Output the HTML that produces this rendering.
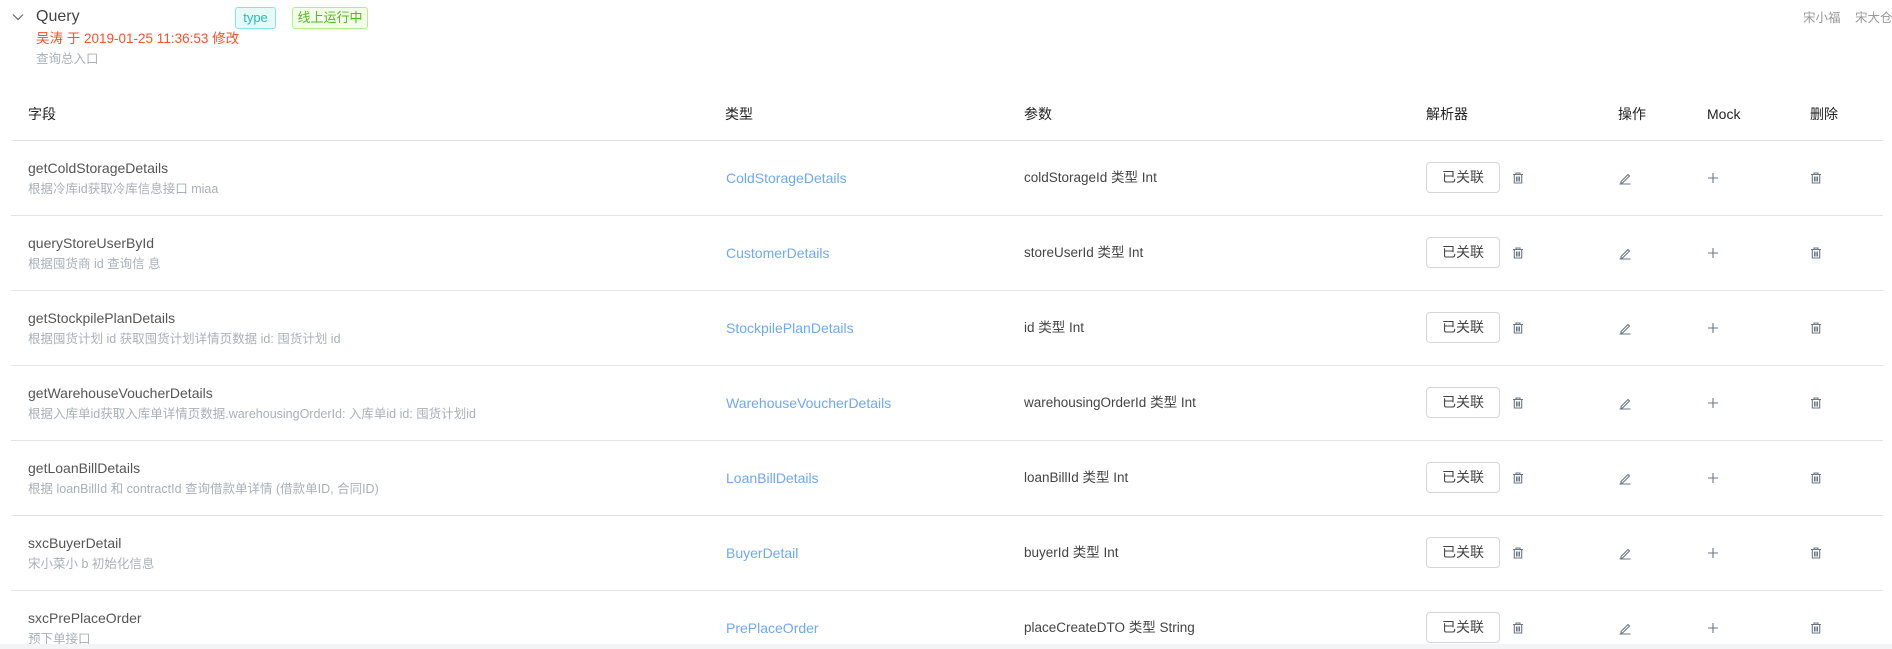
<!DOCTYPE html>
<html><head><meta charset="utf-8"><style>
*{margin:0;padding:0;box-sizing:border-box}
body{width:1892px;height:649px;background:#fff;font-family:"Liberation Sans","Noto Sans CJK SC",sans-serif;position:relative;overflow:hidden;color:#333}
.a{position:absolute;white-space:nowrap;line-height:1}
.tag{position:absolute;border:1px solid;border-radius:3px;font-size:13px;line-height:20px;text-align:center}
.line{position:absolute;left:11px;width:1872px;height:1px;background:#e4e4e4}
.h{font-size:14px;color:#222;top:107px}
.nm{font-size:14px;color:#555}
.ds{font-size:12.5px;color:#aab0b8}
.lk{font-size:14px;color:#6fa8f5}
.pr{font-size:13.5px;color:#444}
.btn{position:absolute;width:74px;height:31px;border:1px solid #d6d6d6;border-radius:4px;font-size:14px;color:#444;text-align:center;line-height:29px}
svg{position:absolute}
.bar{position:absolute;left:0;top:644px;width:1892px;height:5px;background:#f3f4f6}
</style></head><body>
<svg style="left:12px;top:13px" width="12" height="8" viewBox="0 0 12 8"><path d="M1 1.5L6 6.5L11 1.5" fill="none" stroke="#666" stroke-width="1.2"/></svg>
<div class="a" style="left:36px;top:9px;font-size:16px;color:#444">Query</div>
<div class="tag" style="left:235px;top:7px;width:41px;height:22px;border-color:#86e6dd;background:#e6fbf8;color:#20bfb0">type</div>
<div class="tag" style="left:292px;top:7px;width:76px;height:22px;border-color:#b5ec8e;background:#f3fde9;color:#52b820">线上运行中</div>
<div class="a" style="left:36px;top:32px;font-size:13.5px;color:#f5512b">吴涛 于 2019-01-25 11:36:53 修改</div>
<div class="a" style="left:36px;top:53px;font-size:12.5px;color:#aab0b8">查询总入口</div>
<div class="a" style="left:1803px;top:12px;font-size:12.5px;color:#999">宋小福</div>
<div class="a" style="left:1855px;top:12px;font-size:12.5px;color:#999">宋大仓</div>

<div class="a h" style="left:28px">字段</div>
<div class="a h" style="left:725px">类型</div>
<div class="a h" style="left:1024px">参数</div>
<div class="a h" style="left:1426px">解析器</div>
<div class="a h" style="left:1618px">操作</div>
<div class="a h" style="left:1707px">Mock</div>
<div class="a h" style="left:1810px">删除</div>
<div class="line" style="top:140px"></div>

<div id="rows"></div>
<script>
var d=[["getColdStorageDetails","根据冷库id获取冷库信息接口 miaa","ColdStorageDetails","coldStorageId 类型 Int"],
["queryStoreUserById","根据囤货商 id 查询信 息","CustomerDetails","storeUserId 类型 Int"],
["getStockpilePlanDetails","根据囤货计划 id 获取囤货计划详情页数据 id: 囤货计划 id","StockpilePlanDetails","id 类型 Int"],
["getWarehouseVoucherDetails","根据入库单id获取入库单详情页数据.warehousingOrderId: 入库单id id: 囤货计划id","WarehouseVoucherDetails","warehousingOrderId 类型 Int"],
["getLoanBillDetails","根据 loanBillId 和 contractId 查询借款单详情 (借款单ID, 合同ID)","LoanBillDetails","loanBillId 类型 Int"],
["sxcBuyerDetail","宋小菜小 b 初始化信息","BuyerDetail","buyerId 类型 Int"],
["sxcPrePlaceOrder","预下单接口","PrePlaceOrder","placeCreateDTO 类型 String"]];
var trash='<path d="M2 3.5h10M5 3.5V2h4v1.5M3.3 3.5v8.5h7.4V3.5M5.5 5.5v5M7 5.5v5M8.5 5.5v5" fill="none" stroke="#6b7785" stroke-width="1.1"/>';
var h='';
d.forEach(function(r,i){var t=140+i*75;
h+='<div class="a nm" style="left:28px;top:'+(t+21)+'px">'+r[0]+'</div>';
h+='<div class="a ds" style="left:28px;top:'+(t+43)+'px">'+r[1]+'</div>';
h+='<div class="a lk" style="left:726px;top:'+(t+31)+'px">'+r[2]+'</div>';
h+='<div class="a pr" style="left:1024px;top:'+(t+31)+'px">'+r[3]+'</div>';
h+='<div class="btn" style="left:1426px;top:'+(t+22)+'px">已关联</div>';
h+='<svg style="left:1511px;top:'+(t+31)+'px" width="14" height="14" viewBox="0 0 14 14">'+trash+'</svg>';
h+='<svg style="left:1618px;top:'+(t+31)+'px" width="14" height="14" viewBox="0 0 14 14"><path d="M3 10.5L10 3.5l1.5 1.5-7 7H3zM1.5 13h11" fill="none" stroke="#6b7785" stroke-width="1.1"/></svg>';
h+='<svg style="left:1707px;top:'+(t+32)+'px" width="12" height="12" viewBox="0 0 12 12"><path d="M6 1v10M1 6h10" stroke="#6b7785" stroke-width="1.1"/></svg>';
h+='<svg style="left:1809px;top:'+(t+31)+'px" width="14" height="14" viewBox="0 0 14 14">'+trash+'</svg>';
if(i<6)h+='<div class="line" style="top:'+(t+75)+'px"></div>';
});
document.getElementById('rows').innerHTML=h;
</script>
<div class="bar"></div>
</body></html>
